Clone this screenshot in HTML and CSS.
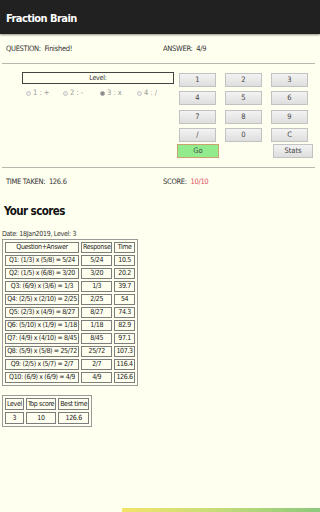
FILE: index.html
```html
<!DOCTYPE html>
<html>
<head>
<meta charset="utf-8">
<link rel="stylesheet" href="styles.css">
</head>
<body>
<header class="appbar"><span class="title">Fraction Brain</span></header>
<main class="content">
  <div class="pair-row qa">
    <div>QUESTION:&nbsp; Finished!</div>
    <div>ANSWER:&nbsp; 4/9</div>
  </div>
  <div class="rule"></div>
  <section class="controls">
    <div class="level-panel">
      <div class="level-box">Level:</div>
      <div class="radios">
        <span class="radio"><i class="dot"></i>1 : +</span>
        <span class="radio"><i class="dot"></i>2 : -</span>
        <span class="radio"><i class="dot on"></i>3 : x</span>
        <span class="radio"><i class="dot"></i>4 : /</span>
      </div>
    </div>
    <div class="keypad">
      <div class="keys">
        <span class="key">1</span><span class="key">2</span><span class="key">3</span>
        <span class="key">4</span><span class="key">5</span><span class="key">6</span>
        <span class="key">7</span><span class="key">8</span><span class="key">9</span>
        <span class="key">/</span><span class="key">0</span><span class="key">C</span>
      </div>
      <div class="actions">
        <span class="key go">Go</span>
        <span class="key stats">Stats</span>
      </div>
    </div>
  </section>
  <div class="rule"></div>
  <div class="pair-row result">
    <div>TIME TAKEN:&nbsp; 126.6</div>
    <div>SCORE:&nbsp; <span class="score">10/10</span></div>
  </div>
  <h2 class="heading">Your scores</h2>
  <div class="date">Date: 18Jan2019, Level: 3</div>
  <table class="grid scores">
    <tr><td class="c1">Question+Answer</td><td class="c2">Response</td><td class="c3">Time</td></tr>
    <tr><td>Q1: (1/3) x (5/8) = 5/24</td><td>5/24</td><td>10.5</td></tr>
    <tr><td>Q2: (1/5) x (6/8) = 3/20</td><td>3/20</td><td>20.2</td></tr>
    <tr><td>Q3: (6/9) x (3/6) = 1/3</td><td>1/3</td><td>39.7</td></tr>
    <tr><td>Q4: (2/5) x (2/10) = 2/25</td><td>2/25</td><td>54</td></tr>
    <tr><td>Q5: (2/3) x (4/9) = 8/27</td><td>8/27</td><td>74.3</td></tr>
    <tr><td>Q6: (5/10) x (1/9) = 1/18</td><td>1/18</td><td>82.9</td></tr>
    <tr><td>Q7: (4/9) x (4/10) = 8/45</td><td>8/45</td><td>97.1</td></tr>
    <tr><td>Q8: (5/9) x (5/8) = 25/72</td><td>25/72</td><td>107.3</td></tr>
    <tr><td>Q9: (2/5) x (5/7) = 2/7</td><td>2/7</td><td>116.4</td></tr>
    <tr><td>Q10: (6/9) x (6/9) = 4/9</td><td>4/9</td><td>126.6</td></tr>
  </table>
  <table class="grid best">
    <tr><td class="b1">Level</td><td class="b2">Top score</td><td class="b3">Best time</td></tr>
    <tr><td>3</td><td>10</td><td>126.6</td></tr>
  </table>
</main>
<div class="ad-strip"></div>
</body>
</html>
```
FILE: styles.css
```css
html, body {
  margin: 0;
  padding: 0;
}
body {
  width: 320px;
  height: 512px;
  overflow: hidden;
  background: #fffff0;
  font-family: "DejaVu Sans Condensed", "Roboto Condensed", Roboto, sans-serif;
  color: #222;
}
.appbar {
  height: 34px;
  background: #212121;
  box-shadow: 0 1px 2px rgba(0,0,0,0.45);
  display: flex;
  align-items: center;
  padding: 3px 0 0 6px;
  box-sizing: border-box;
}
.title {
  color: #fff;
  font-size: 11px;
  letter-spacing: -0.55px;
  font-weight: bold;
}
.content {
  padding: 0 2px;
}
.pair-row {
  display: grid;
  grid-template-columns: 157px 1fr;
  padding-left: 4px;
  font-size: 7.5px;
  letter-spacing: -0.3px;
  line-height: 14px;
  color: #333;
}
.qa {
  margin-top: 8px;
}
.rule {
  height: 1px;
  background: #b8b8b0;
  margin: 7px 3px 0 0;
}
.controls {
  display: flex;
  height: 96px;
  padding-top: 8px;
  box-sizing: border-box;
}
.level-panel {
  width: 152px;
  margin-left: 20px;
}
.level-box {
  height: 12px;
  border: 1px solid #444;
  box-sizing: border-box;
  text-align: center;
  font-size: 7px;
  letter-spacing: -0.2px;
  line-height: 10px;
  color: #333;
}
.radios {
  display: flex;
  margin-top: 4px;
  padding-left: 4px;
}
.radio {
  width: 37px;
  display: flex;
  align-items: center;
  font-size: 7.5px;
  line-height: 10px;
  color: #999;
}
.dot {
  width: 5px;
  height: 5px;
  border-radius: 50%;
  border: 1px solid #c4c4c4;
  background: #eee;
  box-sizing: border-box;
  margin-right: 2px;
}
.dot.on {
  background: #888;
  border-color: #aaa;
}
.keypad {
  margin-left: 3px;
  width: 136px;
  padding-top: 1px;
}
.keys {
  display: grid;
  grid-template-columns: repeat(3, 37px);
  column-gap: 9px;
  row-gap: 4.3px;
  padding-left: 2px;
}
.key {
  height: 14px;
  border: 1px solid #c2c2c2;
  box-sizing: border-box;
  background: linear-gradient(#f3f3f3, #dedede);
  text-align: center;
  font-size: 7.5px;
  line-height: 12px;
  color: #444;
}
.actions {
  display: flex;
  justify-content: space-between;
  margin-top: 2px;
}
.go {
  width: 42px;
  background: #92ec8e;
  border-color: #c8a46a;
}
.stats {
  width: 40px;
}
.result {
  margin-top: 7px;
}
.score {
  color: #e0505e;
}
.heading {
  margin: 14px 0 0 2px;
  font-size: 11.5px;
  letter-spacing: -0.6px;
  line-height: 16px;
  font-weight: bold;
  color: #111;
}
.date {
  margin-top: 10px;
  font-size: 7px;
  letter-spacing: -0.3px;
  line-height: 10px;
  color: #333;
}
.grid {
  border: 1px solid #9a9a9a;
  border-spacing: 2px;
  font-size: 7px;
  letter-spacing: -0.35px;
  color: #222;
}
.grid td {
  border: 1px solid #7d7d7d;
  padding: 0 1px;
  line-height: 9px;
  text-align: center;
  white-space: nowrap;
}
.c1 { width: 70px; }
.c2 { width: 27px; }
.c3 { width: 10px; letter-spacing: -0.45px; }
.best {
  margin-top: 9px;
}
.best td {
  line-height: 10px;
}
.b1 { width: 13px; }
.b2 { width: 25px; }
.b3 { width: 25px; }
.ad-strip {
  position: fixed;
  left: 122px;
  right: 0;
  bottom: 0;
  height: 4px;
  background: linear-gradient(90deg, #f4e46a, #c4dc7a 50%, #8cc87c);
}
```
